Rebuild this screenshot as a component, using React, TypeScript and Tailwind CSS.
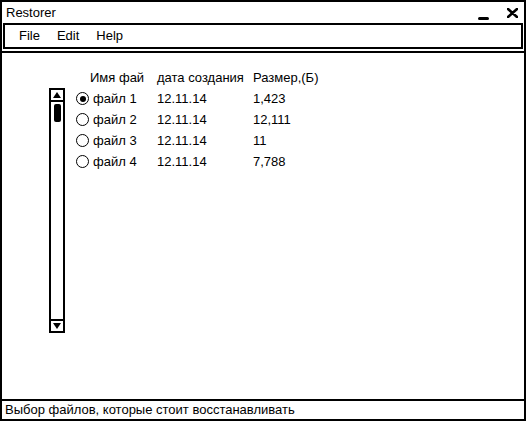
export default function App() {
  const rows = [
    { name: "файл 1", date: "12.11.14", size: "1,423", checked: true },
    { name: "файл 2", date: "12.11.14", size: "12,111", checked: false },
    { name: "файл 3", date: "12.11.14", size: "11", checked: false },
    { name: "файл 4", date: "12.11.14", size: "7,788", checked: false },
  ];

  return (
    <div
      className="w-[526px] h-[421px] bg-white text-black flex flex-col border-2 border-black overflow-hidden"
      style={{ fontFamily: '"Liberation Sans", Arial, sans-serif' }}
    >
      {/* Title bar */}
      <div className="h-[21px] flex items-center justify-between pl-[4px] pr-[6px] shrink-0">
        <span className="text-[13px] leading-none">Restorer</span>
        <div className="flex items-center gap-[18px] pt-[2px]">
          <div className="w-[11px] h-[3px] bg-black rounded-sm mt-[9px]" />
          <svg width="11" height="10" viewBox="0 0 11 10" className="mb-[2px]">
            <path d="M1 1 L10 9 M10 1 L1 9" stroke="black" strokeWidth="2.6" strokeLinecap="round" />
          </svg>
        </div>
      </div>

      {/* Menu bar */}
      <div className="h-[26px] mx-[1px] border-2 border-black flex items-center gap-[17px] pl-[14px] text-[13px] shrink-0">
        <span>File</span>
        <span>Edit</span>
        <span>Help</span>
      </div>

      {/* Content */}
      <div className="flex-1 mt-[2px] border-t-2 border-black flex pl-[47px] pt-[14px]">
        {/* Scrollbar */}
        <div className="w-[16px] h-[245px] mt-[21px] border-2 border-black flex flex-col justify-between shrink-0">
          <div>
            <div className="h-[12px] border-b-2 border-black flex items-center justify-center">
              <svg width="8" height="6" viewBox="0 0 8 6">
                <path d="M0 6 L4 0 L8 6 Z" fill="black" />
              </svg>
            </div>
            <div className="w-[7px] h-[18px] bg-black rounded-[2px] mx-auto mt-[2px]" />
          </div>
          <div className="h-[12px] border-t-2 border-black flex items-center justify-center">
            <svg width="8" height="6" viewBox="0 0 8 6">
              <path d="M0 0 L8 0 L4 6 Z" fill="black" />
            </svg>
          </div>
        </div>

        {/* Table */}
        <div className="ml-[11px] text-[13px] leading-[21px]">
          <div className="flex">
            <span className="w-[81px] pl-[14px]">Имя фай</span>
            <span className="w-[96px]">дата создания</span>
            <span>Размер,(Б)</span>
          </div>
          {rows.map((r) => (
            <div key={r.name} className="flex items-center">
              <span className="w-[81px] flex items-center gap-[4px]">
                <span className="w-[13px] h-[13px] rounded-full border-[1.5px] border-black flex items-center justify-center">
                  {r.checked && <span className="w-[6px] h-[6px] rounded-full bg-black" />}
                </span>
                {r.name}
              </span>
              <span className="w-[96px]">{r.date}</span>
              <span>{r.size}</span>
            </div>
          ))}
        </div>
      </div>

      {/* Status bar */}
      <div className="h-[20px] border-t-2 border-black flex items-center pl-[3px] text-[13px] shrink-0">
        Выбор файлов, которые стоит восстанавливать
      </div>
    </div>
  );
}
